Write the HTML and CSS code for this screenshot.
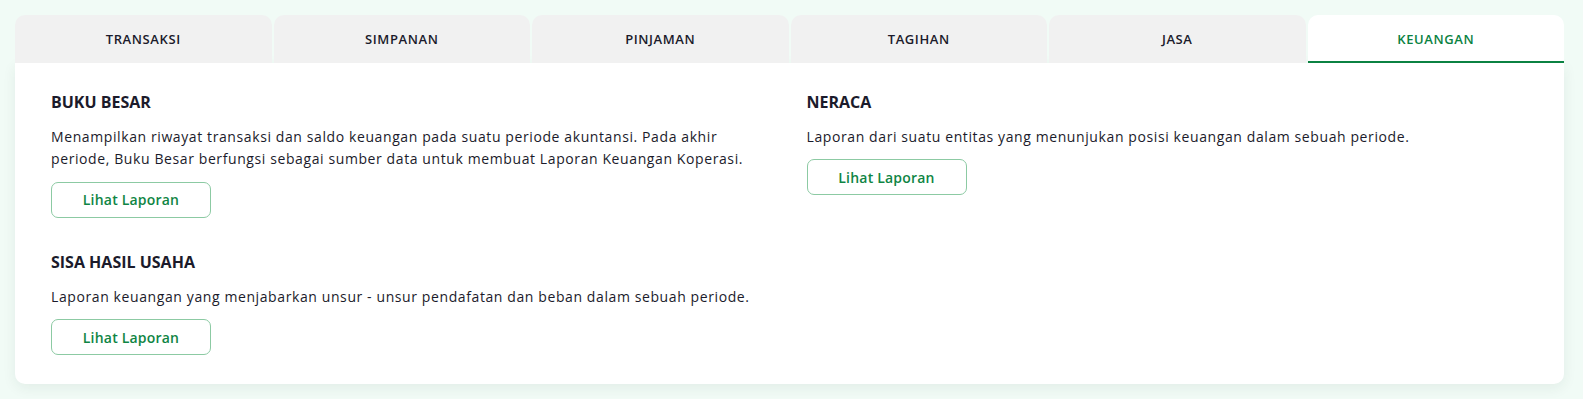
FILE: index.html
```html
<!DOCTYPE html>
<html lang="id">
<head>
<meta charset="utf-8">
<title>Laporan Keuangan</title>
<link rel="stylesheet" href="styles.css">
</head>
<body>
<div class="card">
  <nav class="tabs">
    <div class="tab">TRANSAKSI</div>
    <div class="tab">SIMPANAN</div>
    <div class="tab">PINJAMAN</div>
    <div class="tab">TAGIHAN</div>
    <div class="tab">JASA</div>
    <div class="tab tab-active">KEUANGAN</div>
  </nav>
  <section class="panel">
    <div class="report">
      <h3 class="report-title">BUKU BESAR</h3>
      <p class="report-desc">Menampilkan riwayat transaksi dan saldo keuangan pada suatu periode akuntansi. Pada akhir periode, Buku Besar berfungsi sebagai sumber data untuk membuat Laporan Keuangan Koperasi.</p>
      <button class="report-btn">Lihat Laporan</button>
    </div>
    <div class="report">
      <h3 class="report-title">NERACA</h3>
      <p class="report-desc">Laporan dari suatu entitas yang menunjukan posisi keuangan dalam sebuah periode.</p>
      <button class="report-btn">Lihat Laporan</button>
    </div>
    <div class="report">
      <h3 class="report-title">SISA HASIL USAHA</h3>
      <p class="report-desc">Laporan keuangan yang menjabarkan unsur - unsur pendafatan dan beban dalam sebuah periode.</p>
      <button class="report-btn">Lihat Laporan</button>
    </div>
  </section>
</div>
</body>
</html>
```

FILE: styles.css
```css
* { box-sizing: border-box; }

html, body {
  margin: 0;
  padding: 0;
}

body {
  background: #f1fbf6;
  font-family: "Open Sans", "Noto Sans", sans-serif;
  color: #1b1b2b;
  padding: 15px 19px 14px 15px;
}

.card {
  width: 100%;
}

.tabs {
  display: grid;
  grid-template-columns: repeat(6, 1fr);
  column-gap: 2px;
}

.tab {
  height: 48px;
  display: flex;
  align-items: center;
  justify-content: center;
  background: #f1f1f1;
  border-radius: 10px 10px 0 0;
  font-size: 13px;
  font-weight: 600;
  letter-spacing: 0.6px;
  color: #1b1b2b;
  border-bottom: 2px solid transparent;
  padding-top: 2px;
}

.tab-active {
  background: #ffffff;
  color: #0b8242;
  border-bottom-color: #0b8242;
}

.panel {
  background: #ffffff;
  border-radius: 0 0 10px 10px;
  box-shadow: 0 4px 14px rgba(30, 60, 45, 0.07);
  padding: 27px 36px 29px 36px;
  display: grid;
  grid-template-columns: 1fr 1fr;
  column-gap: 34px;
  row-gap: 32px;
  align-items: start;
}

.report-title {
  margin: 0;
  font-size: 16px;
  line-height: 24px;
  font-weight: 700;
  color: #1b1b2b;
}

.report-desc {
  margin: 12px 0 0 0;
  font-size: 14px;
  line-height: 22.4px;
  letter-spacing: 0.6px;
  color: #1b1b2b;
}

.report-btn {
  display: block;
  margin-top: 11px;
  width: 160px;
  height: 36px;
  background: #ffffff;
  border: 1px solid #8ccaa3;
  border-radius: 7px;
  font-family: inherit;
  font-size: 14px;
  font-weight: 600;
  letter-spacing: 0.2px;
  color: #0f8544;
  cursor: pointer;
}
```
